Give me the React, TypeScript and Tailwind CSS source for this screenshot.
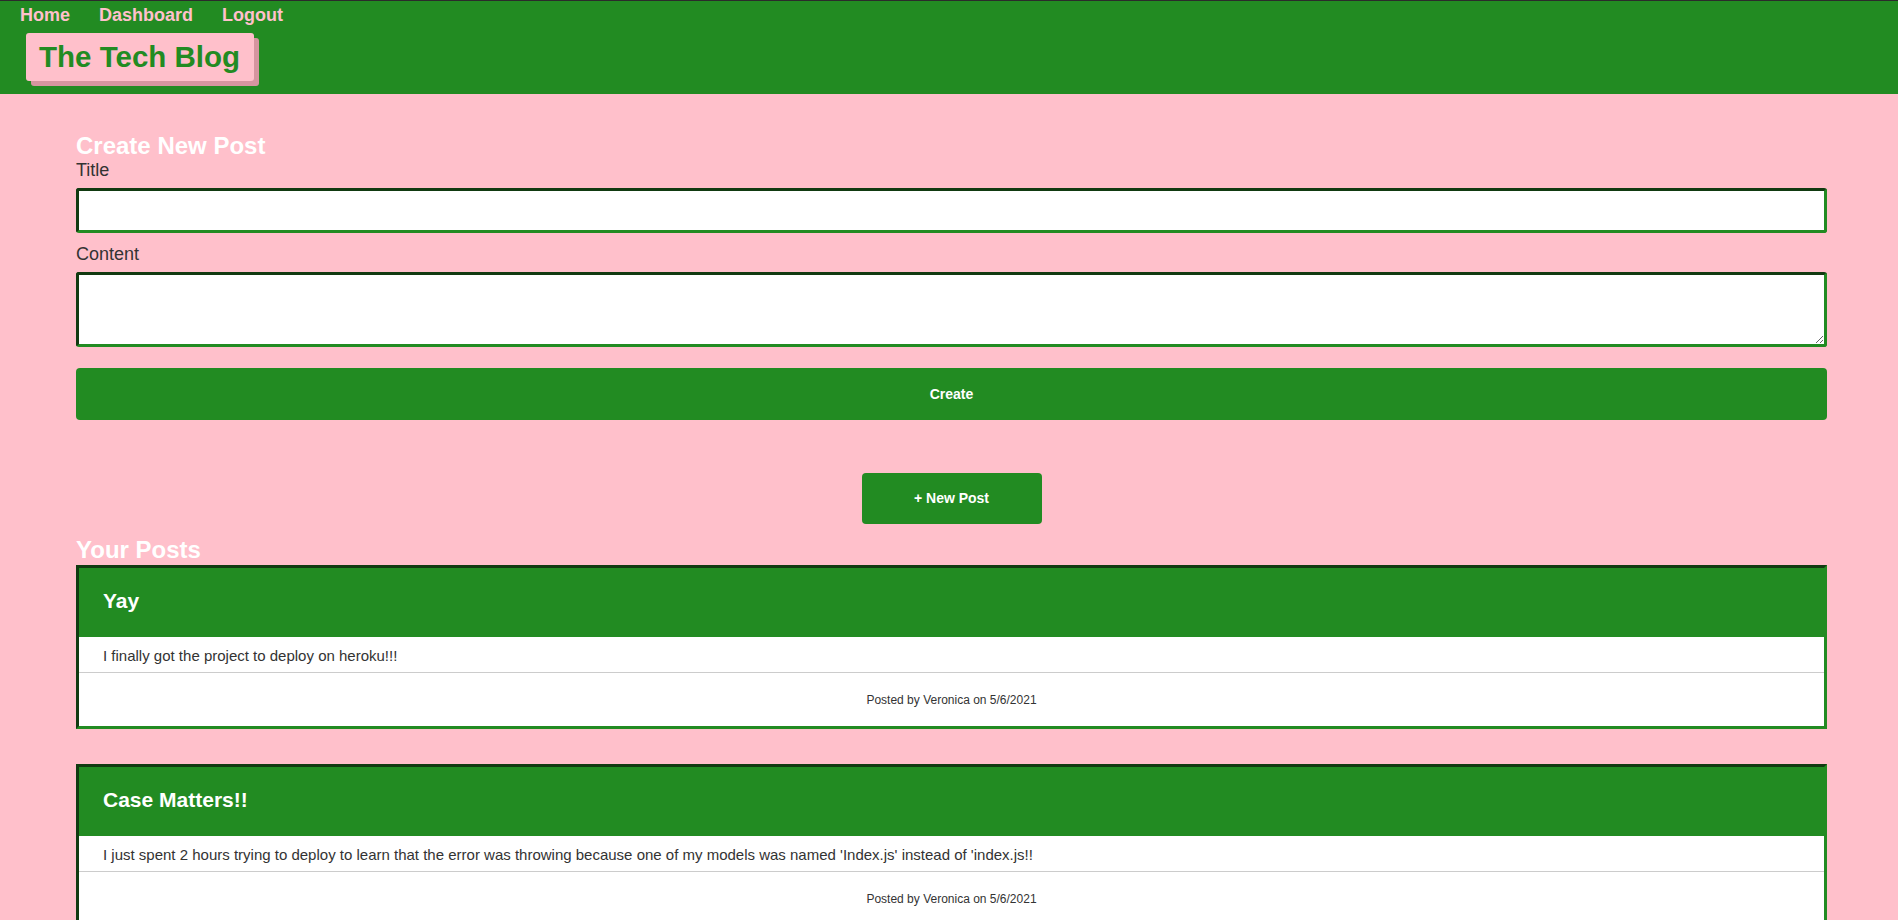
const posts = [
    {
        id: 1,
        title: "Yay",
        body: "I finally got the project to deploy on heroku!!!",
        author: "Veronica",
        date: "5/6/2021",
    },
    {
        id: 2,
        title: "Case Matters!!",
        body: "I just spent 2 hours trying to deploy to learn that the error was throwing because one of my models was named 'Index.js' instead of 'index.js!!",
        author: "Veronica",
        date: "5/6/2021",
    },
];

// inset-looking border used on inputs and cards
const insetBorder =
    "border-[3px] border-t-[#113a11] border-l-[#113a11] border-r-[#228b22] border-b-[#228b22]";

function PostCard({ post }: { post: (typeof posts)[number] }) {
    return (
        <div className={`bg-white ${insetBorder} mb-[35px]`}>
            <div className="bg-[#228b22] pl-[24px] pt-[21px] pb-[24px]">
                <h3 className="text-white font-bold text-[21px] leading-[24px]">
                    {post.title}
                </h3>
            </div>
            <div className="pl-[24px] pt-[10px] pb-[8px] border-b border-[#cccccc]">
                <p className="text-[15px] leading-[17px] text-[#333333]">
                    {post.body}
                </p>
            </div>
            <div className="pt-[20px] pb-[19px] text-center text-[12px] leading-[14px] text-[#333333]">
                Posted by {post.author} on {post.date}
            </div>
        </div>
    );
}

export default function App() {
    return (
        <div className="min-h-screen bg-[#ffc0cb] font-['Liberation_Sans',Arial,sans-serif]">
            <header className="bg-[#228b22] border-t border-[#2b2b2b] pt-[4px] pb-[13px]">
                <nav className="flex gap-[29px] pl-[20px] text-[18px] leading-[21px] font-bold text-[#ffc0cb]">
                    <a href="#">Home</a>
                    <a href="#">Dashboard</a>
                    <a href="#">Logout</a>
                </nav>
                <div className="ml-[26px] mt-[7px] w-[228px] pl-[13px] py-[9px] bg-[#ffc0cb] rounded-[3px] shadow-[5px_5px_0_#d6959f]">
                    <h1 className="text-[#228b22] font-bold text-[29.5px] leading-[30px] whitespace-nowrap">
                        The Tech Blog
                    </h1>
                </div>
            </header>

            <main className="ml-[76px] mr-[71px] pt-[38px]">
                <section id="new-post-form" className="flex flex-col">
                    <h2 className="text-white font-bold text-[24px] leading-[28px]">
                        Create New Post
                    </h2>
                    <label className="text-[18px] leading-[21px] text-[#333333] mb-[7px]">
                        Title
                    </label>
                    <input
                        type="text"
                        className={`h-[45px] bg-white rounded-[3px] ${insetBorder} mb-[11px] outline-none px-2`}
                    />
                    <label className="text-[18px] leading-[21px] text-[#333333] mb-[7px]">
                        Content
                    </label>
                    <textarea
                        className={`h-[75px] bg-white rounded-[3px] ${insetBorder} outline-none px-2`}
                    />
                    <button className="mt-[21px] h-[52px] rounded-[4px] bg-[#228b22] text-white font-bold text-[14px]">
                        Create
                    </button>
                </section>

                <div className="flex justify-center mt-[53px]">
                    <button className="w-[180px] h-[51px] rounded-[4px] bg-[#228b22] text-white font-bold text-[14px]">
                        + New Post
                    </button>
                </div>

                <h2 className="mt-[12px] text-white font-bold text-[24px] leading-[28px]">
                    Your Posts
                </h2>
                <section id="post-list" className="mt-[1px]">
                    {posts.map((post) => (
                        <PostCard key={post.id} post={post} />
                    ))}
                </section>
            </main>
        </div>
    );
}
